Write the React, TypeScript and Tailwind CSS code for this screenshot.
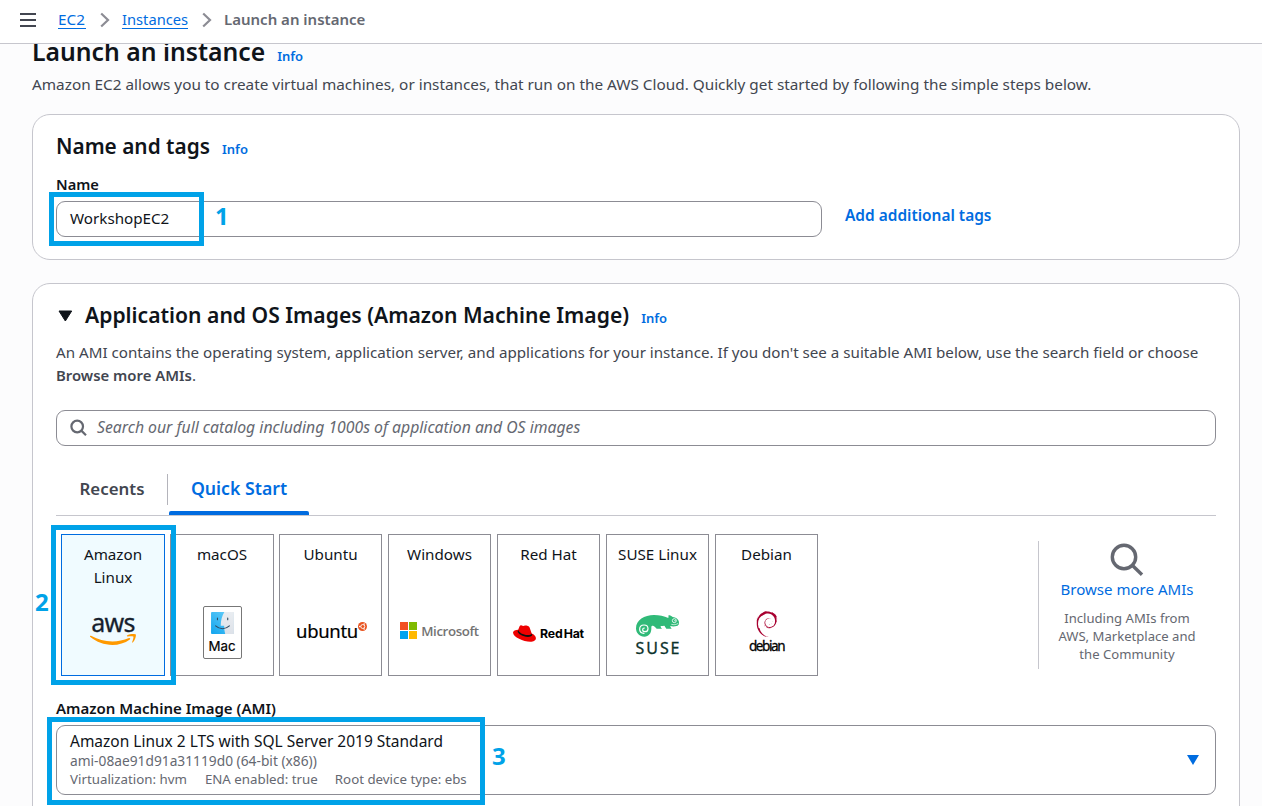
import type { ReactNode } from "react";
import { SiDebian } from "react-icons/si";

function Chevron() {
  return (
    <svg className="h-4 w-[10px]" viewBox="0 0 10 16" fill="none" stroke="#8c8c94" strokeWidth="2.2">
      <path d="M1.2 1.5 8 8l-6.8 6.5" />
    </svg>
  );
}

function Info() {
  return <a className="text-[13px] leading-5 font-semibold text-[#006ce0]">Info</a>;
}

function AwsLogo() {
  return (
    <div className="flex flex-col items-center pb-[9px]">
      <span className="text-[25px] leading-[26px] tracking-[-0.7px] text-[#161e2d] [-webkit-text-stroke:0.3px_#161e2d]">aws</span>
      <svg className="-mt-px h-3 w-12" viewBox="0 0 48 12">
        <path d="M1 2.2c.3-.6.8-.6 1.500-.2C9 5.400 15.500 7.500 23.500 7.500c5.500 0 11-1.100 16.500-3.400 1-.4 1.700.6.800 1.300C36 9 29.500 10.900 23.500 10.900 15 10.900 7.500 8 1.400 3c-.4-.3-.6-.5-.4-.8Z" fill="#f90" />
        <path d="M38 1.600C40.500-.1 46.200-.3 46.800.6c.5.9-.5 5.700-3 7.800-.5.4-.9.2-.7-.3.7-1.800 1.700-4.800 1.200-5.500-.6-.7-3.800-.4-5.600-.2-.7.1-1-.4-.7-.8Z" fill="#f90" />
      </svg>
    </div>
  );
}

function MacLogo() {
  return (
    <div className="flex h-[53px] w-[39px] flex-col items-center rounded-[2px] border border-[#777] bg-white pt-[5px]">
      <svg className="h-[24px] w-[25px]" viewBox="0 0 25 24">
        <defs>
          <linearGradient id="finder-blue" x1="0" y1="1" x2="1" y2="0">
            <stop offset="0" stopColor="#10a4ee" />
            <stop offset="1" stopColor="#6fd2fa" />
          </linearGradient>
          <linearGradient id="finder-gray" x1="0" y1="0" x2="0" y2="1">
            <stop offset="0" stopColor="#e9edf1" />
            <stop offset="1" stopColor="#dde2e9" />
          </linearGradient>
        </defs>
        <rect width="25" height="24" rx="1" fill="url(#finder-blue)" />
        <path d="M14.500 0H25v24H15.500c-.8-2.800-1.100-5.500-1.200-9H10.500C10.700 9 12 4 14.500 0Z" fill="url(#finder-gray)" />
        <path d="M7 6.500v2M18.200 6.500v2" stroke="#2f4a60" strokeWidth="1.200" strokeLinecap="round" />
        <path d="M5 15.200c4.300 4 10.700 4 15 0" stroke="#2f4a60" strokeWidth="1.200" fill="none" strokeLinecap="round" />
      </svg>
      <span className="font-['Inter'] text-[13.300px] leading-[24px] text-black [-webkit-text-stroke:0.2px_black]">Mac</span>
    </div>
  );
}

function UbuntuLogo() {
  return (
    <div className="flex items-start pb-[2px] pl-[2px]">
      <span className="text-[18.500px] leading-[22px] tracking-[-0.300px] text-black [-webkit-text-stroke:0.2px_black]">ubuntu</span>
      <svg className="mt-[2px] h-[9px] w-[9px]" viewBox="0 0 18 18">
        <circle cx="9" cy="9" r="9" fill="#e95420" />
        <circle cx="9.500" cy="9" r="4" fill="none" stroke="#fff" strokeWidth="1.800" />
        <g fill="#fff">
          <circle cx="3.600" cy="9" r="1.600" />
          <circle cx="12.300" cy="4" r="1.600" />
          <circle cx="12.300" cy="14" r="1.600" />
        </g>
      </svg>
    </div>
  );
}

function MicrosoftLogo() {
  return (
    <div className="flex items-center gap-1 pb-[3px]">
      <div className="grid grid-cols-2 gap-px">
        <i className="h-2 w-2 bg-[#f25022]" />
        <i className="h-2 w-2 bg-[#7fba00]" />
        <i className="h-2 w-2 bg-[#00a4ef]" />
        <i className="h-2 w-2 bg-[#ffb900]" />
      </div>
      <span className="font-['Open_Sans'] text-[13.300px] leading-4 font-semibold tracking-[-0.400px] text-[#737373]">Microsoft</span>
    </div>
  );
}

function RedHatLogo() {
  return (
    <div className="flex items-center gap-1 pt-[3px]">
      <svg className="h-[17px] w-[23px]" viewBox="0 0 23 17">
        <path d="M5.200 4.800 6.600 1.300C7 .4 7.800.1 8.700.4l1.600.5L12 .5c2.200 0 4 .6 4.600 1.900l2.100 6c2.300 1 4.200 2.600 4.200 4.600 0 2.600-2.300 3.800-5.600 3.800C10.500 16.800 0 12.300 0 7.600c0-1.800 2.500-2.500 5.200-2.800Z" fill="#e00" />
        <path d="m5.200 4.800-.6 1.700c.3 2.200 5.300 5.400 10.300 5.400 2.700 0 4.100-.8 4.400-1.900l-.6-1.600c-.3 1.100-1.700 1.700-4 1.700-4.700 0-9-2.700-9.500-5.300Z" fill="#111" />
      </svg>
      <span className="font-['Inter'] text-[12.300px] leading-4 font-bold tracking-[-0.200px] [word-spacing:-1.5px] text-black">Red Hat</span>
    </div>
  );
}

function SuseLogo() {
  return (
    <div className="flex flex-col items-center pt-[5px]">
      <svg className="h-[22px] w-[43px]" viewBox="0 0 129 66">
        <path d="M25 65C11 65 0 55 0 40 0 15 25 0 54 0c16 0 30 4 43 9l1-9c5 1 9 3 12 6 10 1 17 6 19 15 1 6-1 10-7 12-7 2-13 2-19 0 0 3 1 4 4 8H91c-3-4-4-7-6-9-4 1-7 1-11 1 0 4 1 5 4 8H62c-4-4-6-8-11-9-3 0-5 1-5 5 1 17-7 28-21 28Z" fill="#30ba78" />
        <path d="M24 55c-8 0-13-5-13-12 0-8 6-13 13-13 8 0 12 5 12 11 0 5-4 9-9 9-4 0-7-2-7-6 0-3 2-5 5-5" fill="none" stroke="#fff" strokeWidth="3.600" strokeLinecap="round" />
        <circle cx="115" cy="17" r="6" fill="none" stroke="#fff" strokeWidth="2.500" />
        <circle cx="117" cy="17" r="2" fill="#fff" />
        <path d="M106 28c7 2 14 1 21-3" fill="none" stroke="#fff" strokeWidth="2" />
      </svg>
      <span className="mt-[4px] pl-[2px] text-[16px] leading-[14px] tracking-[1.900px] text-[#0c322c] [-webkit-text-stroke:0.3px_#0c322c]">SUSE</span>
    </div>
  );
}

function DebianLogo() {
  return (
    <div className="flex flex-col items-center">
      <SiDebian className="h-[26px] w-[26px] text-[#a80030]" />
      <span className="mt-[2px] text-[13.500px] leading-[15px] tracking-[-1.400px] text-black [-webkit-text-stroke:0.3px_black]">debian</span>
    </div>
  );
}

const systems: { name: string; logo: ReactNode }[] = [
  { name: "Ubuntu", logo: <UbuntuLogo /> },
  { name: "Windows", logo: <MicrosoftLogo /> },
  { name: "Red Hat", logo: <RedHatLogo /> },
  { name: "SUSE Linux", logo: <SuseLogo /> },
  { name: "Debian", logo: <DebianLogo /> },
];

export default function App() {
  return (
    <div className="h-[806px] w-[1262px] overflow-hidden bg-[#fcfcfd] font-['Noto_Sans',sans-serif] text-[15.2px] text-[#0f141a]">
      <header className="relative z-10 flex h-11 items-center border-b border-[#c6c6cd] bg-white pb-[5px] pl-5">
        <svg className="mt-px h-[14px] w-4" viewBox="0 0 16 14" fill="#424650">
          <path d="M0 0h16v2H0zM0 6h16v2H0zM0 12h16v2H0z" />
        </svg>
        <nav className="flex items-center leading-[18px]">
          <a className="ml-[22px] w-[28px] border-b border-[#006ce0] text-[15.300px] text-[#006ce0]">EC2</a>
          <span className="ml-[14px] pt-px"><Chevron /></span>
          <a className="ml-[12px] w-[66px] border-b border-[#006ce0] text-[14.700px] text-[#006ce0]">Instances</a>
          <span className="ml-[14px] pt-px"><Chevron /></span>
          <span className="ml-[12px] text-[15px] font-semibold text-[#656871]">Launch an instance</span>
        </nav>
      </header>

      <main className="-mt-2 pr-[22px] pl-8">
        <div className="flex h-[31px] items-baseline gap-3">
          <h1 className="text-[24.750px] leading-[31px] font-[650] whitespace-nowrap">Launch an instance</h1>
          <Info />
        </div>
        <p className="mt-[6px] text-[15.320px] leading-[22px] whitespace-nowrap text-[#424650]">
          Amazon EC2 allows you to create virtual machines, or instances, that run on the AWS Cloud. Quickly get started by following the simple steps below.
        </p>

        <section className="relative mt-[19px] h-[146px] rounded-[18px] border border-[#c6c6cd] bg-white px-[23px] pt-[18px]">
          <div className="flex h-[26px] items-baseline gap-3">
            <h2 className="text-[20.800px] leading-[26px] font-semibold">Name and tags</h2>
            <Info />
          </div>
          <label className="mt-[14px] block text-[14.700px] leading-[22px] font-semibold">Name</label>
          <div className="mt-[6px] flex items-start gap-[23px]">
            <div className="flex h-9 w-[766px] items-center rounded-[9px] border border-[#8c8c94] bg-white pb-px pl-[13px]">
              WorkshopEC2
            </div>
            <a className="pt-[3px] text-[15.450px] leading-[23px] font-semibold text-[#006ce0]">Add additional tags</a>
          </div>
          <div className="absolute top-[77px] left-[16px] h-[54px] w-[155px] border-[5px] border-[#00a2e8]" />
          <span className="absolute top-[85px] left-[182px] text-[24px] leading-8 font-bold text-[#00a2e8]">1</span>
        </section>

        <section className="relative mt-[23px] h-[560px] rounded-[18px] border border-[#c6c6cd] bg-white px-[23px] pt-[18px]">
          <div className="flex h-[26px] items-baseline">
            <svg className="ml-[2px] h-[13px] w-[15px]" viewBox="0 0 15 13">
              <path d="M1 1h12.700L7.350 11Z" fill="#0f141a" stroke="#0f141a" strokeLinejoin="round" strokeWidth="1" />
            </svg>
            <h2 className="ml-3 text-[21.120px] leading-[26px] font-semibold whitespace-nowrap">
              Application and OS Images (Amazon Machine Image)
            </h2>
            <span className="ml-3"><Info /></span>
          </div>
          <p className="mt-[13px] text-[15.160px] leading-[23px] whitespace-nowrap text-[#424650]">
            An AMI contains the operating system, application server, and applications for your instance. If you don't see a suitable AMI below, use the search field or choose
            <br />
            <span className="text-[14.880px] font-semibold">Browse more AMIs</span>.
          </p>

          <div className="mt-[23px] flex h-9 items-center rounded-[9px] border border-[#8c8c94] bg-white pb-px pl-[13px] text-[15.780px] text-[#656871] italic">
            <svg className="mt-px mr-[9px] h-[18px] w-[18px]" viewBox="0 0 18 18" fill="none" stroke="#656871" strokeWidth="2.200">
              <circle cx="7.200" cy="7.500" r="5.800" />
              <path d="m11.300 11.600 4.700 4.600" />
            </svg>
            Search our full catalog including 1000s of application and OS images
          </div>

          <div className="mt-[28px] flex h-[42px] items-start border-b border-[#c6c6cd] font-semibold">
            <div className="flex h-[31px] w-[112px] items-center justify-center border-r border-[#b4b4bb] pb-[2px] pl-px text-[16.870px] text-[#424650]">
              Recents
            </div>
            <div className="ml-px flex h-[41px] w-[140px] flex-col items-center justify-between text-[17.700px] text-[#006ce0]">
              <span className="leading-[29px]">Quick Start</span>
              <span className="h-1 w-full rounded-t-[2px] bg-[#006ce0]" />
            </div>
          </div>

          <div className="mt-[18px] flex h-[142px] pl-[5px]">
            <div className="flex w-[104px] flex-col items-center border border-[#006ce0] bg-[#f0fbff] pt-2 text-center leading-[23px]">
              <span>Amazon<br />Linux</span>
              <div className="flex flex-1 items-center"><AwsLogo /></div>
            </div>
            <div className="ml-[5px] flex w-[104px] flex-col items-center border border-[#8c8c94] bg-white pt-2 leading-[23px]">
              <span className="h-[46px]">macOS</span>
              <div className="flex flex-1 items-center"><MacLogo /></div>
            </div>
            <div className="ml-[5px] flex gap-[6px]">
              {systems.map((s) => (
                <div key={s.name} className="flex w-[103px] flex-col items-center border border-[#8c8c94] bg-white pt-2 text-center leading-[23px]">
                  <span className="h-[46px] whitespace-nowrap">{s.name}</span>
                  <div className="flex flex-1 items-center">{s.logo}</div>
                </div>
              ))}
            </div>
            <div className="mt-[7px] ml-auto flex h-[128px] w-[178px] flex-col items-center border-l border-[#c6c6cd] pt-[2px] pr-px">
              <svg className="h-[34px] w-[34px]" viewBox="0 0 34 34" fill="none" stroke="#656871" strokeWidth="3.400">
                <circle cx="14" cy="14" r="11.700" />
                <path d="m22 22 10 9.800" />
              </svg>
              <a className="mt-px text-[15.050px] leading-[23px] text-[#006ce0]">Browse more AMIs</a>
              <p className="mt-[8px] text-center text-[13.100px] leading-[18px] text-[#656871]">
                Including AMIs from<br />AWS, Marketplace and<br />the Community
              </p>
            </div>
          </div>

          <div className="mt-[21px] text-[15.030px] leading-[22px] font-semibold">Amazon Machine Image (AMI)</div>
          <div className="mt-[6px] flex h-[70px] items-center justify-between rounded-[9px] border border-[#8c8c94] bg-white pr-4 pl-[13px]">
            <div className="pb-[3px] text-[13.300px] leading-[18px] text-[#656871]">
              <div className="text-[15.490px] leading-[22px] text-[#0f141a]">Amazon Linux 2 LTS with SQL Server 2019 Standard</div>
              <div className="text-[13.760px]">ami-08ae91d91a31119d0 (64-bit (x86))</div>
              <div className="flex gap-[18px]">
                <span>Virtualization: hvm</span>
                <span>ENA enabled: true</span>
                <span className="-ml-px">Root device type: ebs</span>
              </div>
            </div>
            <svg className="h-[10px] w-3" viewBox="0 0 12 10" fill="#006ce0">
              <path d="M0 0h12L6 10Z" />
            </svg>
          </div>

          <div className="absolute top-[241px] left-[18px] h-[160px] w-[125px] border-[5px] border-[#00a2e8]" />
          <span className="absolute top-[302px] left-[2px] text-[24px] leading-8 font-bold text-[#00a2e8]">2</span>
          <div className="absolute top-[433px] left-[14px] h-[88px] w-[438px] border-[5px] border-[#00a2e8]" />
          <span className="absolute top-[456px] left-[459px] text-[24px] leading-8 font-bold text-[#00a2e8]">3</span>
        </section>
      </main>
    </div>
  );
}
